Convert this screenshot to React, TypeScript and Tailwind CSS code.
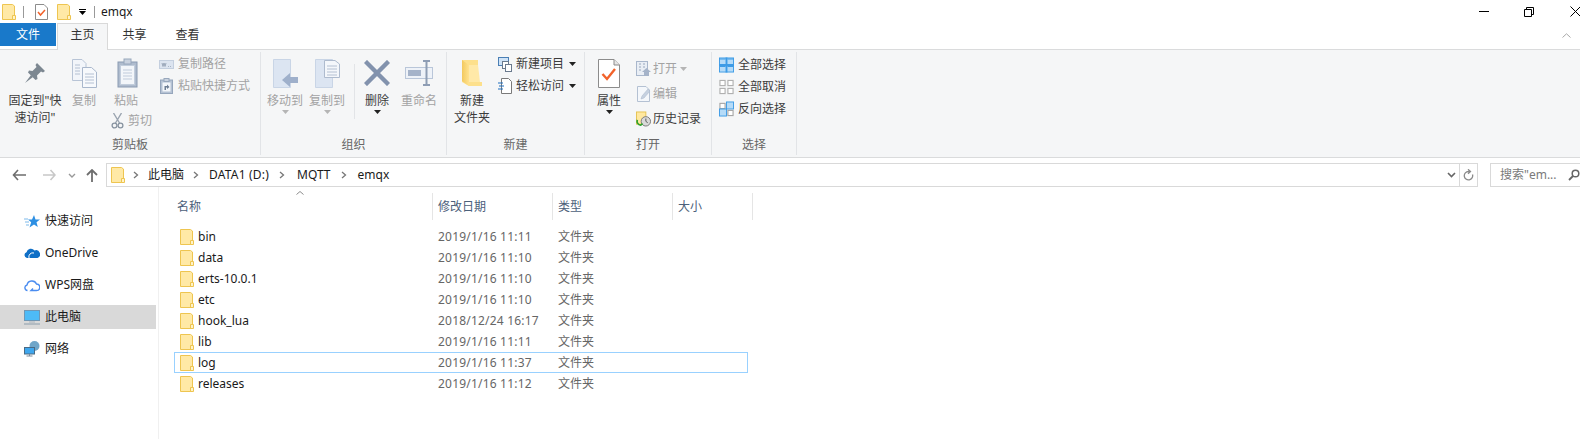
const FILES = [
  { name: 'bin', date: '2019/1/16 11:11' },
  { name: 'data', date: '2019/1/16 11:10' },
  { name: 'erts-10.0.1', date: '2019/1/16 11:10' },
  { name: 'etc', date: '2019/1/16 11:10' },
  { name: 'hook_lua', date: '2018/12/24 16:17' },
  { name: 'lib', date: '2019/1/16 11:11' },
  { name: 'log', date: '2019/1/16 11:37', focused: true },
  { name: 'releases', date: '2019/1/16 11:12' },
];

const Folder = () => (
  <svg width="14" height="16" viewBox="0 0 14 16" className="shrink-0">
    <path d="M.5.5H10.5L12.5 2V15.5H.5Z" fill="#FFE9A6" stroke="#EEC550" />
    <path d="M10.5 15.5V11.5H13.5V15.5Z" fill="#FFF3C9" stroke="#EEC550" />
  </svg>
);

const Caret = ({ color = '#222' }: { color?: string }) => (
  <svg width="7" height="4" viewBox="0 0 7 4" className="shrink-0">
    <path d="M0 0H7L3.5 4Z" fill={color} />
  </svg>
);

const Chevron = () => (
  <svg width="6" height="8" viewBox="0 0 6 8" className="shrink-0">
    <path d="M1 1L4.5 4L1 7" fill="none" stroke="#777" strokeWidth="1.3" />
  </svg>
);

const PinIcon = () => (
  <svg width="22" height="22" viewBox="0 0 22 22">
    <path d="M13 1L21 9L19 10.5L17 9.5L13 13.5L13.5 17L11.5 18L4 10.5L5 8.5L8.5 9L12.5 5L11.5 3Z" fill="#7C8791" />
    <path d="M7 13L1 21L9 15Z" fill="#7C8791" />
  </svg>
);

const CopyIcon = () => (
  <svg width="25" height="29" viewBox="0 0 25 29">
    <path d="M.5.5H10L14 4.5V21.5H.5Z" fill="#F2F5FA" stroke="#B8C4D6" />
    <path d="M10.5 8.5H19.5L24.5 13V28.5H10.5Z" fill="#F7F9FC" stroke="#A9B7CC" />
    <path d="M13 15H22M13 18H22M13 21H22M13 24H22M3 6H8M3 9H8M3 12H8M3 15H8" stroke="#B4C0D2" />
  </svg>
);

const PasteIcon = () => (
  <svg width="21" height="30" viewBox="0 0 21 30">
    <rect x="1" y="4" width="19" height="25" fill="#AFBCCE" stroke="#8A9AB2" />
    <rect x="3.5" y="7.5" width="14" height="19" fill="#F3F6FA" stroke="#C2CDDC" />
    <path d="M6 12H15M6 15H15M6 18H15M6 21H15" stroke="#C0CBDB" />
    <rect x="7" y="1" width="7" height="5" fill="#C9D2DF" stroke="#98A7BC" />
  </svg>
);

const ScissorsIcon = () => (
  <svg width="13" height="16" viewBox="0 0 13 16">
    <path d="M2.5 0L8.5 10M10.5 0L4.5 10" stroke="#9AA4B0" strokeWidth="1.4" fill="none" />
    <circle cx="3.5" cy="12.5" r="2.4" fill="none" stroke="#8793A0" strokeWidth="1.3" />
    <circle cx="9.5" cy="12.5" r="2.4" fill="none" stroke="#8793A0" strokeWidth="1.3" />
  </svg>
);

const PathIcon = () => (
  <svg width="15" height="9" viewBox="0 0 15 9">
    <rect x=".5" y=".5" width="14" height="8" fill="#DCE4F0" stroke="#C4CFDF" />
    <path d="M3 3L4 6.5L5 3L6 6.5L7 3M9 6.5H9.8M11 6.5H11.8" stroke="#8C99AC" strokeWidth=".8" fill="none" />
  </svg>
);

const ShortcutIcon = () => (
  <svg width="13" height="16" viewBox="0 0 13 16">
    <rect x=".5" y="2" width="12" height="13.5" fill="#B5C2D4" stroke="#96A6BC" />
    <rect x="2.5" y="4.5" width="8" height="9" fill="#F3F6FA" />
    <rect x="4" y=".5" width="5" height="3" fill="#C9D2DF" stroke="#98A7BC" />
    <path d="M4.5 12V8H7V6.5L9.5 9L7 11V9.5H6V12Z" fill="#6E7E94" />
  </svg>
);

const MoveIcon = ({ copy = false }: { copy?: boolean }) => (
  <svg width="27" height="29" viewBox="0 0 27 29">
    <path d="M1.5.5H18.5V28.5H1.5Z" fill="#DCE5F2" stroke="#C9D5E6" />
    {copy ? (
      <>
        <path d="M10.5 1.5H21L25.5 5V18.5H10.5Z" fill="#F4F7FB" stroke="#AEBBCE" />
        <path d="M13 7H23M13 10H23M13 13H23M13 16H23" stroke="#B4C0D2" />
      </>
    ) : (
      <path d="M10 21L18 14V18H26V24H18V28Z" fill="#9FB0CB" />
    )}
  </svg>
);

const DeleteIcon = () => (
  <svg width="26" height="26" viewBox="0 0 26 26">
    <path d="M3 3L23 23M23 3L3 23" stroke="#8292AD" strokeWidth="4.4" strokeLinecap="square" />
  </svg>
);

const RenameIcon = () => (
  <svg width="28" height="26" viewBox="0 0 28 26">
    <rect x=".5" y="7.5" width="27" height="11" fill="#EEF2F8" stroke="#B9C6D9" />
    <rect x="3" y="10" width="13" height="6" fill="#A5B3C9" />
    <path d="M18 1H25M18 25H25M21.5 1V25" stroke="#8E9DB4" strokeWidth="2" />
  </svg>
);

const NewFolderIcon = () => (
  <svg width="20" height="28" viewBox="0 0 20 28">
    <defs>
      <linearGradient id="nf" x1="0" x2="1" y1="0" y2="0">
        <stop offset="0" stopColor="#F3C95E" />
        <stop offset="1" stopColor="#FFE28F" />
      </linearGradient>
    </defs>
    <path d="M0 1H16V23H20V27H7L0 23Z" fill="#FDE08C" />
    <path d="M0 1L7 6V27L0 22Z" fill="url(#nf)" />
    <path d="M7 6H16L18 23H7Z" fill="#FFE9A8" />
  </svg>
);

const NewItemIcon = () => (
  <svg width="14" height="15" viewBox="0 0 14 15">
    <rect x=".5" y=".5" width="10" height="8" fill="#CFE3F7" stroke="#4A7FB5" />
    <rect x="4.5" y="4.5" width="6" height="7" fill="#fff" stroke="#6A7A8E" />
    <rect x="7.5" y="7.5" width="6" height="7" fill="#fff" stroke="#6A7A8E" />
  </svg>
);

const EasyIcon = () => (
  <svg width="14" height="16" viewBox="0 0 14 16">
    <path d="M3.5.5H10.5L13.5 3.5V15.5H3.5Z" fill="#fff" stroke="#7A7A7A" />
    <path d="M0 5H5M1 8H6M0 11H5" stroke="#1F6FC0" strokeWidth="1.2" />
  </svg>
);

const PropsIcon = () => (
  <svg width="22" height="29" viewBox="0 0 22 29">
    <path d="M.5.5H16L21.5 6V28.5H.5Z" fill="#fff" stroke="#8C8C8C" />
    <path d="M16 .5V6H21.5" fill="#E6E6E6" stroke="#8C8C8C" />
    <path d="M4.5 15L9 20L17 10" fill="none" stroke="#F2622A" strokeWidth="2.4" />
  </svg>
);

const OpenIcon = () => (
  <svg width="15" height="16" viewBox="0 0 15 16">
    <rect x=".5" y=".5" width="11" height="14" fill="#E9EEF5" stroke="#A9B7CC" />
    <path d="M3 3H5M7 3H9M3 6H5M7 6H9M3 9H5" stroke="#98A7BC" />
    <path d="M8 15V11H6L10.5 7L15 11H13V15Z" fill="#A5B3C9" />
  </svg>
);

const EditIcon = () => (
  <svg width="14" height="16" viewBox="0 0 14 16">
    <path d="M.5.5H9L12.5 4V15.5H.5Z" fill="#F4F7FB" stroke="#B4C1D3" />
    <path d="M4 13L5 10L11 3L13 5L7 12Z" fill="#C6D1E0" stroke="#A6B4C8" strokeWidth=".5" />
  </svg>
);

const HistoryIcon = () => (
  <svg width="16" height="16" viewBox="0 0 16 16">
    <rect x=".5" y=".5" width="10" height="13" fill="#FFE89F" stroke="#E5C250" />
    <circle cx="10.5" cy="10.5" r="5" fill="#D9D9D9" stroke="#777" />
    <path d="M10.5 7.5V10.5L12.5 12" stroke="#555" fill="none" />
    <path d="M1.5 9A4 4 0 0 0 5 14.5L7 13" stroke="#2FA32F" strokeWidth="1.8" fill="none" />
  </svg>
);

const SelectAllIcon = () => (
  <svg width="16" height="16" viewBox="0 0 16 16">
    <rect x=".5" y=".5" width="15" height="15" fill="#B5DBF8" stroke="#3D9BE6" />
    <path d="M8 0V16M0 8H16" stroke="#3D9BE6" strokeWidth="2" />
    <path d="M1 1H7V2H1ZM9 1H15V2H9ZM1 9H7V10H1ZM9 9H15V10H9Z" fill="#3D9BE6" />
  </svg>
);

const SelectNoneIcon = () => (
  <svg width="16" height="16" viewBox="0 0 16 16">
    <rect x="1" y="1" width="5.5" height="5.5" fill="#fff" stroke="#B0B0B0" strokeWidth="1.2" />
    <rect x="9.5" y="1" width="5.5" height="5.5" fill="#fff" stroke="#B0B0B0" strokeWidth="1.2" />
    <rect x="1" y="9.5" width="5.5" height="5.5" fill="#fff" stroke="#B0B0B0" strokeWidth="1.2" />
    <rect x="9.5" y="9.5" width="5.5" height="5.5" fill="#fff" stroke="#B0B0B0" strokeWidth="1.2" />
  </svg>
);

const SelectInvertIcon = () => (
  <svg width="16" height="16" viewBox="0 0 16 16">
    <rect x="1" y="2" width="5.5" height="5.5" fill="#fff" stroke="#A6A6A6" strokeWidth="1.2" />
    <rect x="8" y=".5" width="7.5" height="7.5" fill="#B5DBF8" stroke="#3D9BE6" />
    <rect x=".5" y="8" width="7.5" height="7.5" fill="#B5DBF8" stroke="#3D9BE6" />
    <rect x="9.5" y="9.5" width="5.5" height="5.5" fill="#fff" stroke="#A6A6A6" strokeWidth="1.2" />
  </svg>
);

const LargeButton = ({
  width,
  icon,
  lines,
  disabled,
  caret,
}: {
  width: string;
  icon: React.ReactNode;
  lines: string[];
  disabled?: boolean;
  caret?: 'dark' | 'light';
}) => (
  <div className={`flex flex-col items-center shrink-0 pt-[3px] ${width}`}>
    <div className="flex h-[34px] items-center justify-center">{icon}</div>
    <div className={`mt-[2px] text-center leading-[17px] whitespace-nowrap ${disabled ? 'text-[#A3A3A3]' : 'text-[#3C3C3C]'}`}>
      {lines.map((line) => (
        <div key={line}>{line}</div>
      ))}
    </div>
    {caret && (
      <div className="mt-[1px]">
        <Caret color={caret === 'dark' ? '#222' : '#B5B5B5'} />
      </div>
    )}
  </div>
);

const SmallRow = ({
  icon,
  text,
  disabled,
  height = 'h-[22px]',
  gap = 'gap-[4px]',
  caret,
}: {
  icon: React.ReactNode;
  text: string;
  disabled?: boolean;
  height?: string;
  gap?: string;
  caret?: React.ReactNode;
}) => (
  <div className={`flex items-center ${height} ${gap} whitespace-nowrap ${disabled ? 'text-[#A3A3A3]' : 'text-[#3C3C3C]'}`}>
    <div className="flex w-[15px] shrink-0 items-center justify-center">{icon}</div>
    <span>{text}</span>
    {caret && <div className="ml-[1px]">{caret}</div>}
  </div>
);

const Group = ({ width, label, children }: { width: string; label: string; children: React.ReactNode }) => (
  <div className={`flex h-[103px] mt-[2px] flex-col border-r border-[#E2E4E7] shrink-0 ${width}`}>
    <div className="flex h-[84px] pt-[1px]">{children}</div>
    <div className="h-[20px] text-center leading-[20px] text-[#666]">{label}</div>
  </div>
);

const SideItem = ({ icon, text, selected }: { icon: React.ReactNode; text: string; selected?: boolean }) => (
  <div className={`flex h-[24px] w-[156px] items-center gap-[5px] pl-[24px] mb-[8px] text-[#1A1A1A] ${selected ? 'bg-[#D9D9D9]' : ''}`}>
    <div className="flex w-[16px] justify-center">{icon}</div>
    <span>{text}</span>
  </div>
);

export default function App() {
  return (
    <div className="h-[439px] w-[1580px] overflow-hidden bg-white text-[12px] font-['Noto_Sans','Noto_Sans_CJK_SC',sans-serif]">
      {/* title bar */}
      <div className="flex h-[23px] items-center pl-[2px]">
        <Folder />
        <div className="ml-[7px] h-[12px] w-px bg-[#999]" />
        <div className="ml-[11px]">
          <svg width="13" height="16" viewBox="0 0 13 16">
            <path d="M.5.5H9L12.5 4V15.5H.5Z" fill="#fff" stroke="#8C8C8C" />
            <path d="M3 8L5.5 11L10 6" fill="none" stroke="#F2622A" strokeWidth="1.5" />
          </svg>
        </div>
        <div className="ml-[9px]">
          <Folder />
        </div>
        <div className="ml-[8px] flex flex-col items-center gap-[1px]">
          <div className="h-px w-[7px] bg-black" />
          <Caret color="#000" />
        </div>
        <div className="ml-[8px] h-[12px] w-px bg-[#999]" />
        <span className="ml-[6px] text-[#1A1A1A]">emqx</span>
        <div className="ml-auto flex items-center">
          <div className="h-px w-[10px] bg-black" />
          <svg width="10" height="10" viewBox="0 0 10 10" className="ml-[35px]">
            <path d="M.5 2.5H7.5V9.5H.5ZM2.5 2.5V.5H9.5V7.5H7.5" fill="none" stroke="#000" />
          </svg>
          <svg width="11" height="11" viewBox="0 0 11 11" className="ml-[36px] mr-[-1px]">
            <path d="M.5.5L10.5 10.5M10.5.5L.5 10.5" stroke="#000" />
          </svg>
        </div>
      </div>

      {/* tabs */}
      <div className="flex h-[26px] items-start">
        <div className="flex h-[23px] w-[56px] items-center justify-center bg-[#1979CA] text-white">文件</div>
        <div className="relative z-10 ml-px flex h-[27px] w-[51px] items-center justify-center border border-b-0 border-[#D9D9D9] bg-[#F5F6F7] pb-[4px] text-[#333]">
          主页
        </div>
        <div className="flex h-[23px] w-[53px] items-center justify-center text-[#333]">共享</div>
        <div className="flex h-[23px] w-[53px] items-center justify-center text-[#333]">查看</div>
        <svg width="9" height="5" viewBox="0 0 9 5" className="ml-auto mr-[9px] mt-[10px]">
          <path d="M.5 4.5L4.5 .8L8.5 4.5" fill="none" stroke="#A8A8A8" />
        </svg>
      </div>

      {/* ribbon */}
      <div className="flex h-[109px] border-y border-[#DADBDC] bg-[#F5F6F7]">
        <Group width="w-[261px]" label="剪贴板">
          <div className="flex pl-[4px]">
            <LargeButton width="w-[62px]" icon={<PinIcon />} lines={['固定到"快', '速访问"']} />
            <LargeButton width="w-[36px]" icon={<CopyIcon />} lines={['复制']} disabled />
            <div className="flex w-[57px] shrink-0 flex-col items-start pt-[3px]">
              <div className="ml-[15px] flex h-[34px] items-center">
                <PasteIcon />
              </div>
              <div className="ml-[12px] mt-[2px] leading-[17px] text-[#A3A3A3]">粘贴</div>
              <div className="ml-[9px] mt-[2px] flex h-[20px] items-center gap-[4px] text-[#A3A3A3]">
                <ScissorsIcon />
                <span>剪切</span>
              </div>
            </div>
            <div className="flex flex-col">
              <SmallRow icon={<PathIcon />} text="复制路径" disabled />
              <SmallRow icon={<ShortcutIcon />} text="粘贴快捷方式" disabled />
            </div>
          </div>
        </Group>

        <Group width="w-[186px]" label="组织">
          <div className="flex">
            <LargeButton width="w-[48px]" icon={<MoveIcon />} lines={['移动到']} disabled caret="light" />
            <LargeButton width="w-[36px]" icon={<MoveIcon copy />} lines={['复制到']} disabled caret="light" />
            <div className="ml-[9px] mt-[11px] h-[55px] w-px bg-[#E2E4E7]" />
            <LargeButton width="w-[44px]" icon={<DeleteIcon />} lines={['删除']} caret="dark" />
            <LargeButton width="w-[40px]" icon={<RenameIcon />} lines={['重命名']} disabled />
          </div>
        </Group>

        <Group width="w-[138px]" label="新建">
          <div className="flex">
            <LargeButton width="w-[50px]" icon={<NewFolderIcon />} lines={['新建', '文件夹']} />
            <div className="flex flex-col">
              <SmallRow icon={<NewItemIcon />} text="新建项目" caret={<Caret />} />
              <SmallRow icon={<EasyIcon />} text="轻松访问" caret={<Caret />} />
            </div>
          </div>
        </Group>

        <Group width="w-[127px]" label="打开">
          <div className="flex">
            <LargeButton width="w-[48px]" icon={<PropsIcon />} lines={['属性']} caret="dark" />
            <div className="ml-[3px] flex flex-col pt-[3px]">
              <SmallRow icon={<OpenIcon />} text="打开" disabled height="h-[25px]" gap="gap-[2px]" caret={<Caret color="#B5B5B5" />} />
              <SmallRow icon={<EditIcon />} text="编辑" disabled height="h-[25px]" gap="gap-[2px]" />
              <SmallRow icon={<HistoryIcon />} text="历史记录" height="h-[25px]" gap="gap-[2px]" />
            </div>
          </div>
        </Group>

        <Group width="w-[85px]" label="选择">
          <div className="flex flex-col pl-[7px] pt-[1px]">
            <SmallRow icon={<SelectAllIcon />} text="全部选择" gap="gap-[4px]" />
            <SmallRow icon={<SelectNoneIcon />} text="全部取消" gap="gap-[4px]" />
            <SmallRow icon={<SelectInvertIcon />} text="反向选择" gap="gap-[4px]" />
          </div>
        </Group>
      </div>

      {/* address row */}
      <div className="mt-[5px] flex h-[24px] items-center pl-[12px]">
        <svg width="14" height="12" viewBox="0 0 14 12" className="shrink-0">
          <path d="M6 1L1.5 6L6 11M1.5 6H14" fill="none" stroke="#6E6E6E" strokeWidth="1.6" />
        </svg>
        <svg width="13" height="12" viewBox="0 0 13 12" className="ml-[17px] shrink-0">
          <path d="M7.5 1L12 6L7.5 11M12 6H0" fill="none" stroke="#C8C8C8" strokeWidth="1.6" />
        </svg>
        <svg width="8" height="5" viewBox="0 0 8 5" className="ml-[12px] shrink-0">
          <path d="M1 1L4 4L7 1" fill="none" stroke="#999" strokeWidth="1.4" />
        </svg>
        <svg width="12" height="13" viewBox="0 0 12 13" className="ml-[10px] shrink-0">
          <path d="M1 6L6 1L11 6M6 1V13" fill="none" stroke="#6E6E6E" strokeWidth="1.8" />
        </svg>
        <div className="ml-[8px] flex h-[24px] w-[1372px] shrink-0 items-center border border-[#D9D9D9] pl-[4px] text-[#1A1A1A]">
          <Folder />
          <div className="ml-[8px]"><Chevron /></div>
          <span className="ml-[9px]">此电脑</span>
          <div className="ml-[9px]"><Chevron /></div>
          <span className="ml-[10px] tracking-[0.2px]">DATA1 (D:)</span>
          <div className="ml-[10px]"><Chevron /></div>
          <span className="ml-[12px]">MQTT</span>
          <div className="ml-[10px]"><Chevron /></div>
          <span className="ml-[11px]">emqx</span>
          <svg width="9" height="6" viewBox="0 0 9 6" className="ml-auto mr-[3px]">
            <path d="M1 1L4.5 4.5L8 1" fill="none" stroke="#666" strokeWidth="1.6" />
          </svg>
          <div className="flex h-full w-[18px] items-center justify-center border-l border-[#D9D9D9]">
            <svg width="11" height="12" viewBox="0 0 11 12">
              <path d="M9.5 5.5A4.2 4.2 0 1 1 5.5 2.5H7M5 .3L7.5 2.5L5 4.7" fill="none" stroke="#8A8A8A" strokeWidth="1.3" />
            </svg>
          </div>
        </div>
        <div className="ml-[12px] flex h-[24px] w-[95px] shrink-0 items-center border border-[#D9D9D9] pl-[9px] text-[#7A7A7A]">
          <span className="whitespace-nowrap">搜索"em...</span>
          <svg width="12" height="12" viewBox="0 0 12 12" className="ml-[11px] shrink-0">
            <circle cx="7.5" cy="4.5" r="3.3" fill="none" stroke="#666" strokeWidth="1.5" />
            <path d="M5 7L1 11" stroke="#666" strokeWidth="1.8" />
          </svg>
        </div>
      </div>

      {/* body */}
      <div className="flex h-[252px]">
        <div className="h-full w-[159px] shrink-0 border-r border-[#F0F0F0] pt-[22px]">
          <SideItem
            text="快速访问"
            icon={
              <svg width="16" height="13" viewBox="0 0 16 13">
                <path d="M10 0L11.5 4.5H16L12.5 7.3L13.8 12L10 9.5L5.5 12.5L7.2 7.3L4 4.5H8Z" fill="#2D8FE3" />
                <path d="M0 4H4M1 7H5M2 10H5" stroke="#7DB9EA" />
              </svg>
            }
          />
          <SideItem
            text="OneDrive"
            icon={
              <svg width="16" height="10" viewBox="0 0 16 10">
                <path d="M3 10A3 3 0 0 1 2.5 4.2A4.5 4.5 0 0 1 10.5 2.5A3.7 3.7 0 0 1 13.5 10Z" fill="#0F6FC6" />
                <path d="M5 10A4 4 0 0 1 10 5" fill="none" stroke="#fff" />
              </svg>
            }
          />
          <SideItem
            text="WPS网盘"
            icon={
              <svg width="16" height="14" viewBox="0 0 16 14">
                <path d="M3.5 12.5A2.8 2.8 0 0 1 3 7A5 5 0 0 1 12.5 6A3.2 3.2 0 0 1 12.5 12.5H7L9 10.5" fill="none" stroke="#4A8CF0" strokeWidth="1.4" />
              </svg>
            }
          />
          <SideItem
            selected
            text="此电脑"
            icon={
              <svg width="16" height="15" viewBox="0 0 16 15">
                <rect x=".5" y=".5" width="15" height="10" fill="#4DBBF7" stroke="#6F97B5" />
                <path d="M5 12H11" stroke="#A9B4BE" />
                <path d="M0 14H16" stroke="#98A6B2" strokeWidth="1.2" />
              </svg>
            }
          />
          <SideItem
            text="网络"
            icon={
              <svg width="16" height="16" viewBox="0 0 16 16">
                <circle cx="10.5" cy="5" r="5" fill="#6FA6C9" />
                <rect x=".5" y="6.5" width="10" height="6.5" fill="#3FA7EE" stroke="#4A6A84" />
                <path d="M2.5 15H8.5M5.5 13V15" stroke="#7D8B99" />
              </svg>
            }
          />
        </div>

        <div className="min-w-0 flex-1">
          <div className="relative mt-[6px] flex h-[27px] text-[#4C607A]">
            <div className="flex w-[274px] items-center border-r border-[#E5E5E5] pl-[18px]">名称</div>
            <div className="flex w-[120px] items-center border-r border-[#E5E5E5] pl-[5px]">修改日期</div>
            <div className="flex w-[120px] items-center border-r border-[#E5E5E5] pl-[5px]">类型</div>
            <div className="flex w-[80px] items-center border-r border-[#E5E5E5] pl-[5px]">大小</div>
            <svg width="8" height="4" viewBox="0 0 8 4" className="absolute left-[137px] top-[-2px]">
              <path d="M.5 3.5L4 .5L7.5 3.5" fill="none" stroke="#8C8C8C" />
            </svg>
          </div>
          <div className="ml-[15px] mt-[6px] w-[574px]">
            {FILES.map((file) => (
              <div
                key={file.name}
                className={`flex h-[21px] items-center border pl-[5px] ${file.focused ? 'border-[#99D1FF]' : 'border-transparent'}`}
              >
                <div className="flex w-[258px] items-center gap-[4px] text-[#1A1A1A]">
                  <Folder />
                  <span>{file.name}</span>
                </div>
                <div className="w-[120px] text-[#666] tracking-[0.2px]">{file.date}</div>
                <div className="text-[#666]">文件夹</div>
              </div>
            ))}
          </div>
        </div>
      </div>
    </div>
  );
}
